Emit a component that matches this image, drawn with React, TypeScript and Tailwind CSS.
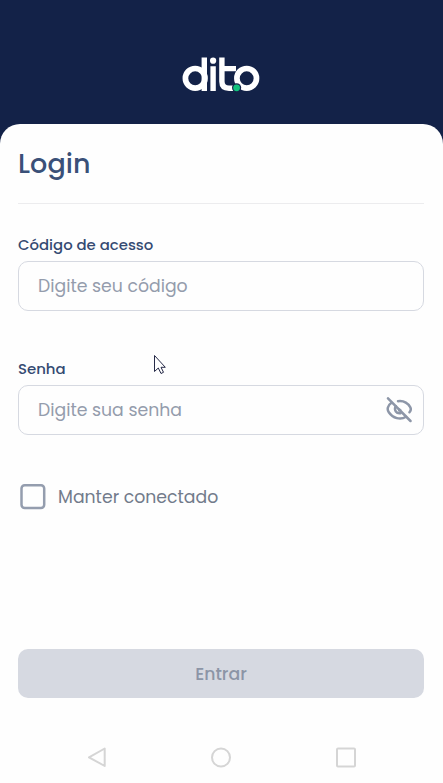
import React from "react";

function Logo() {
  return (
    <svg width="80" height="36" viewBox="181 56 80 36" className="mt-14 mr-px" fill="none" role="img" aria-label="dito">
      <g stroke="#fff" strokeWidth="5.7">
        <circle cx="195.2" cy="78.3" r="9.8" />
        <path strokeWidth="5.4" d="M204.3 57.5V91M213.1 66.2V91M221.9 57.5V81.5Q221.9 88.2 229 88.2H233.5M221.8 68.6H236" />
        <circle cx="246.7" cy="78.3" r="9.8" />
      </g>
      <circle cx="213.1" cy="60.7" r="3.1" fill="#fff" />
      <circle cx="236.6" cy="87.8" r="4.6" fill="#132248" />
      <circle cx="236.6" cy="87.8" r="3.4" fill="#12c27c" />
    </svg>
  );
}

function EyeOff() {
  return (
    <svg width="26" height="26" viewBox="386 397 26 26" fill="none" stroke="#8d96a8" strokeWidth="2.5" strokeLinecap="round">
      <path d="M388 398.3L410.5 421" />
      <path d="M391.5 402.8C387.5 405.5 386.8 409.5 388.8 412.3C392.8 418.3 400.5 420.3 406 416.8" />
      <path d="M398 401.2C403.5 400.5 408 403.5 410.2 407.2C411.2 409 410.8 410.8 409.5 412.3" />
      <path d="M395.8 406.2C393.6 410 396.5 414 400.5 413.2" />
      <path d="M399.3 409.5V410.2H400.3" />
    </svg>
  );
}

function Field({ label, placeholder, children }: { label: string; placeholder: string; children?: React.ReactNode }) {
  return (
    <label className="block h-[76px]">
      <span className="block h-[26px] text-[14.9px] leading-5 font-medium whitespace-nowrap text-[#344a72]">{label}</span>
      <span className="flex h-[50px] items-center rounded-[10px] border border-[#d6d9e1] pr-[11px] pl-[19px]">
        <input placeholder={placeholder} className="min-w-0 flex-1 pt-[2px] text-[17.3px] outline-none placeholder:text-[#949cac]" />
        {children}
      </span>
    </label>
  );
}

export default function App() {
  return (
    <div className="relative flex h-[783px] w-[443px] flex-col overflow-hidden bg-[#132248] font-['Poppins','Inter',sans-serif]">
      <header className="flex h-[124px] shrink-0 justify-center">
        <Logo />
      </header>
      <main className="flex flex-1 flex-col rounded-t-[20px] bg-[#fefefe] pr-[19px] pl-[18px]">
        <h1 className="h-20 border-b border-[#ececee] pt-5 text-[27px] leading-10 font-medium tracking-[0.1px] text-[#3a5078]">Login</h1>
        <div className="mt-[31px] flex w-[406px] flex-col gap-12">
          <Field label="Código de acesso" placeholder="Digite seu código" />
          <Field label="Senha" placeholder="Digite sua senha">
            <EyeOff />
          </Field>
        </div>
        <label className="mt-[49px] ml-[2px] flex h-[26px] items-start gap-3">
          <svg width="26" height="26" fill="none" stroke="#949dae" strokeWidth="2.5" aria-hidden="true">
            <rect x="1.5" y="1.3" width="22.7" height="22.7" rx="3.2" />
          </svg>
          <input type="checkbox" className="sr-only" />
          <span className="text-[17.3px] leading-[27px] text-[#727b8b]">Manter conectado</span>
        </label>
        <button className="mt-[139px] h-[49px] w-[406px] shrink-0 rounded-[10px] bg-[#d6d9e1] pt-[2px] text-[17.3px] font-medium text-[#8c95a6]">Entrar</button>
        <nav className="mt-[48px] ml-[69px] flex h-6 w-[270px] items-center justify-between self-start text-[#d5d5d5]">
          <svg width="20" height="22" viewBox="87 747 20 22" fill="none" stroke="currentColor" strokeWidth="2" strokeLinejoin="round"><path d="M89 757.3L104.7 748.5V766Z" /></svg>
          <svg width="22" height="22" fill="none" stroke="currentColor" strokeWidth="2"><circle cx="11" cy="10.5" r="9" /></svg>
          <svg width="22" height="22" fill="none" stroke="currentColor" strokeWidth="2"><rect x="2" y="1.5" width="18" height="18" rx="1" /></svg>
        </nav>
      </main>
      <svg className="absolute top-[354px] left-[153px]" width="14" height="22" viewBox="153 354 14 22" fill="#fff" stroke="#262a48" strokeWidth="1">
        <path d="M154.5 355.5V371.5L158.3 368L161 373.5L163.5 372.3L161 367.3H165.3Z" />
      </svg>
    </div>
  );
}
